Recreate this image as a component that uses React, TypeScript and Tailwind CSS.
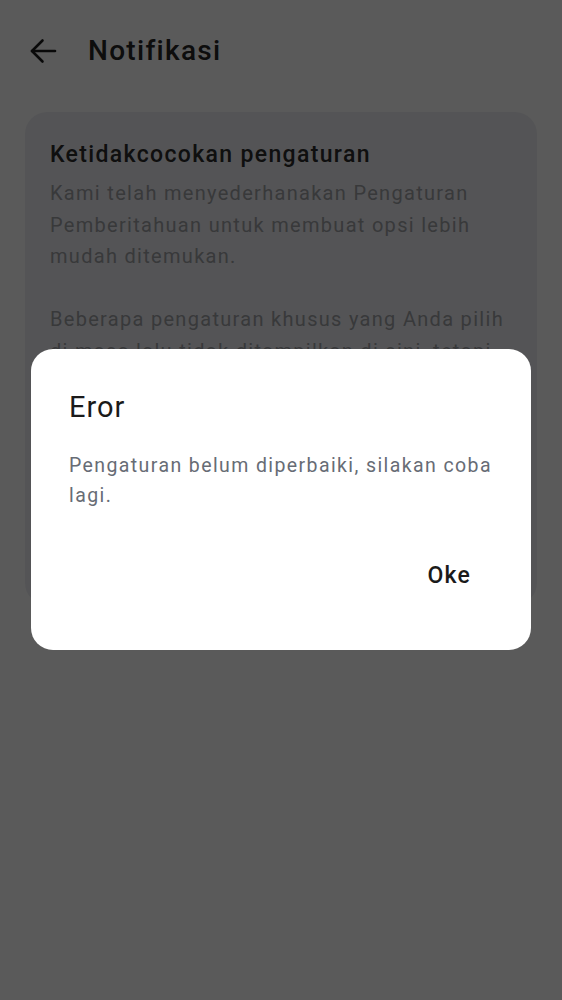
import React from "react";

export default function App() {
  return (
    <div
      className="relative w-[562px] h-[1000px] overflow-hidden bg-[#ededed]"
      style={{ fontFamily: "Roboto, 'Noto Sans', sans-serif" }}
    >
      {/* Header */}
      <div className="flex items-center h-[100px] pl-[29px] pt-[1px]">
        <svg width="28" height="28" viewBox="0 0 28 28" fill="none" stroke="#1a1a1a" strokeWidth="2.6" strokeLinecap="round" strokeLinejoin="round">
          <path d="M26 14H3" />
          <path d="M13.5 3.5L3 14l10.5 10.5" />
        </svg>
        <h1 className="ml-[31px] text-[28px] font-medium text-[#222222] tracking-[1.3px]">Notifikasi</h1>
      </div>

      {/* Card */}
      <div className="mx-[25px] mt-[12px] h-[493px] rounded-[22px] bg-[#dddee2] px-[25px] pt-[28px]">
        <h2 className="text-[23px] leading-[30px] font-medium text-[#282828] tracking-[1.35px]">Ketidakcocokan pengaturan</h2>
        <p className="mt-[8px] text-[20px] leading-[31.5px] text-[#94959a] tracking-[1.3px]">
          Kami telah menyederhanakan Pengaturan Pemberitahuan untuk membuat opsi lebih mudah ditemukan.
        </p>
        <p className="mt-[31.5px] text-[20px] leading-[31.5px] text-[#94959a] tracking-[1.3px]">
          Beberapa pengaturan khusus yang Anda pilih di masa lalu tidak ditampilkan di sini, tetapi masih diterapkan pada akun Anda. Anda dapat mengatur ulang semuanya ke default.
        </p>
      </div>

      {/* Backdrop */}
      <div className="absolute inset-0 bg-black/[0.62]" />

      {/* Dialog */}
      <div className="absolute left-[31px] top-[349px] w-[500px] h-[301px] rounded-[22px] bg-white pl-[38px] pr-[30px] pt-[40px]">
        <h3 className="text-[29px] leading-[36px] text-[#1a1a1a] tracking-[1px]">Eror</h3>
        <p className="mt-[26px] text-[19.5px] leading-[30px] text-[#676c75] tracking-[1.4px]">
          Pengaturan belum diperbaiki, silakan coba lagi.
        </p>
        <div className="mt-[50px] flex justify-end">
          <span className="text-[23px] leading-[30px] font-medium text-[#1a1a1a] tracking-[1.2px] pr-[30px]">Oke</span>
        </div>
      </div>
    </div>
  );
}
